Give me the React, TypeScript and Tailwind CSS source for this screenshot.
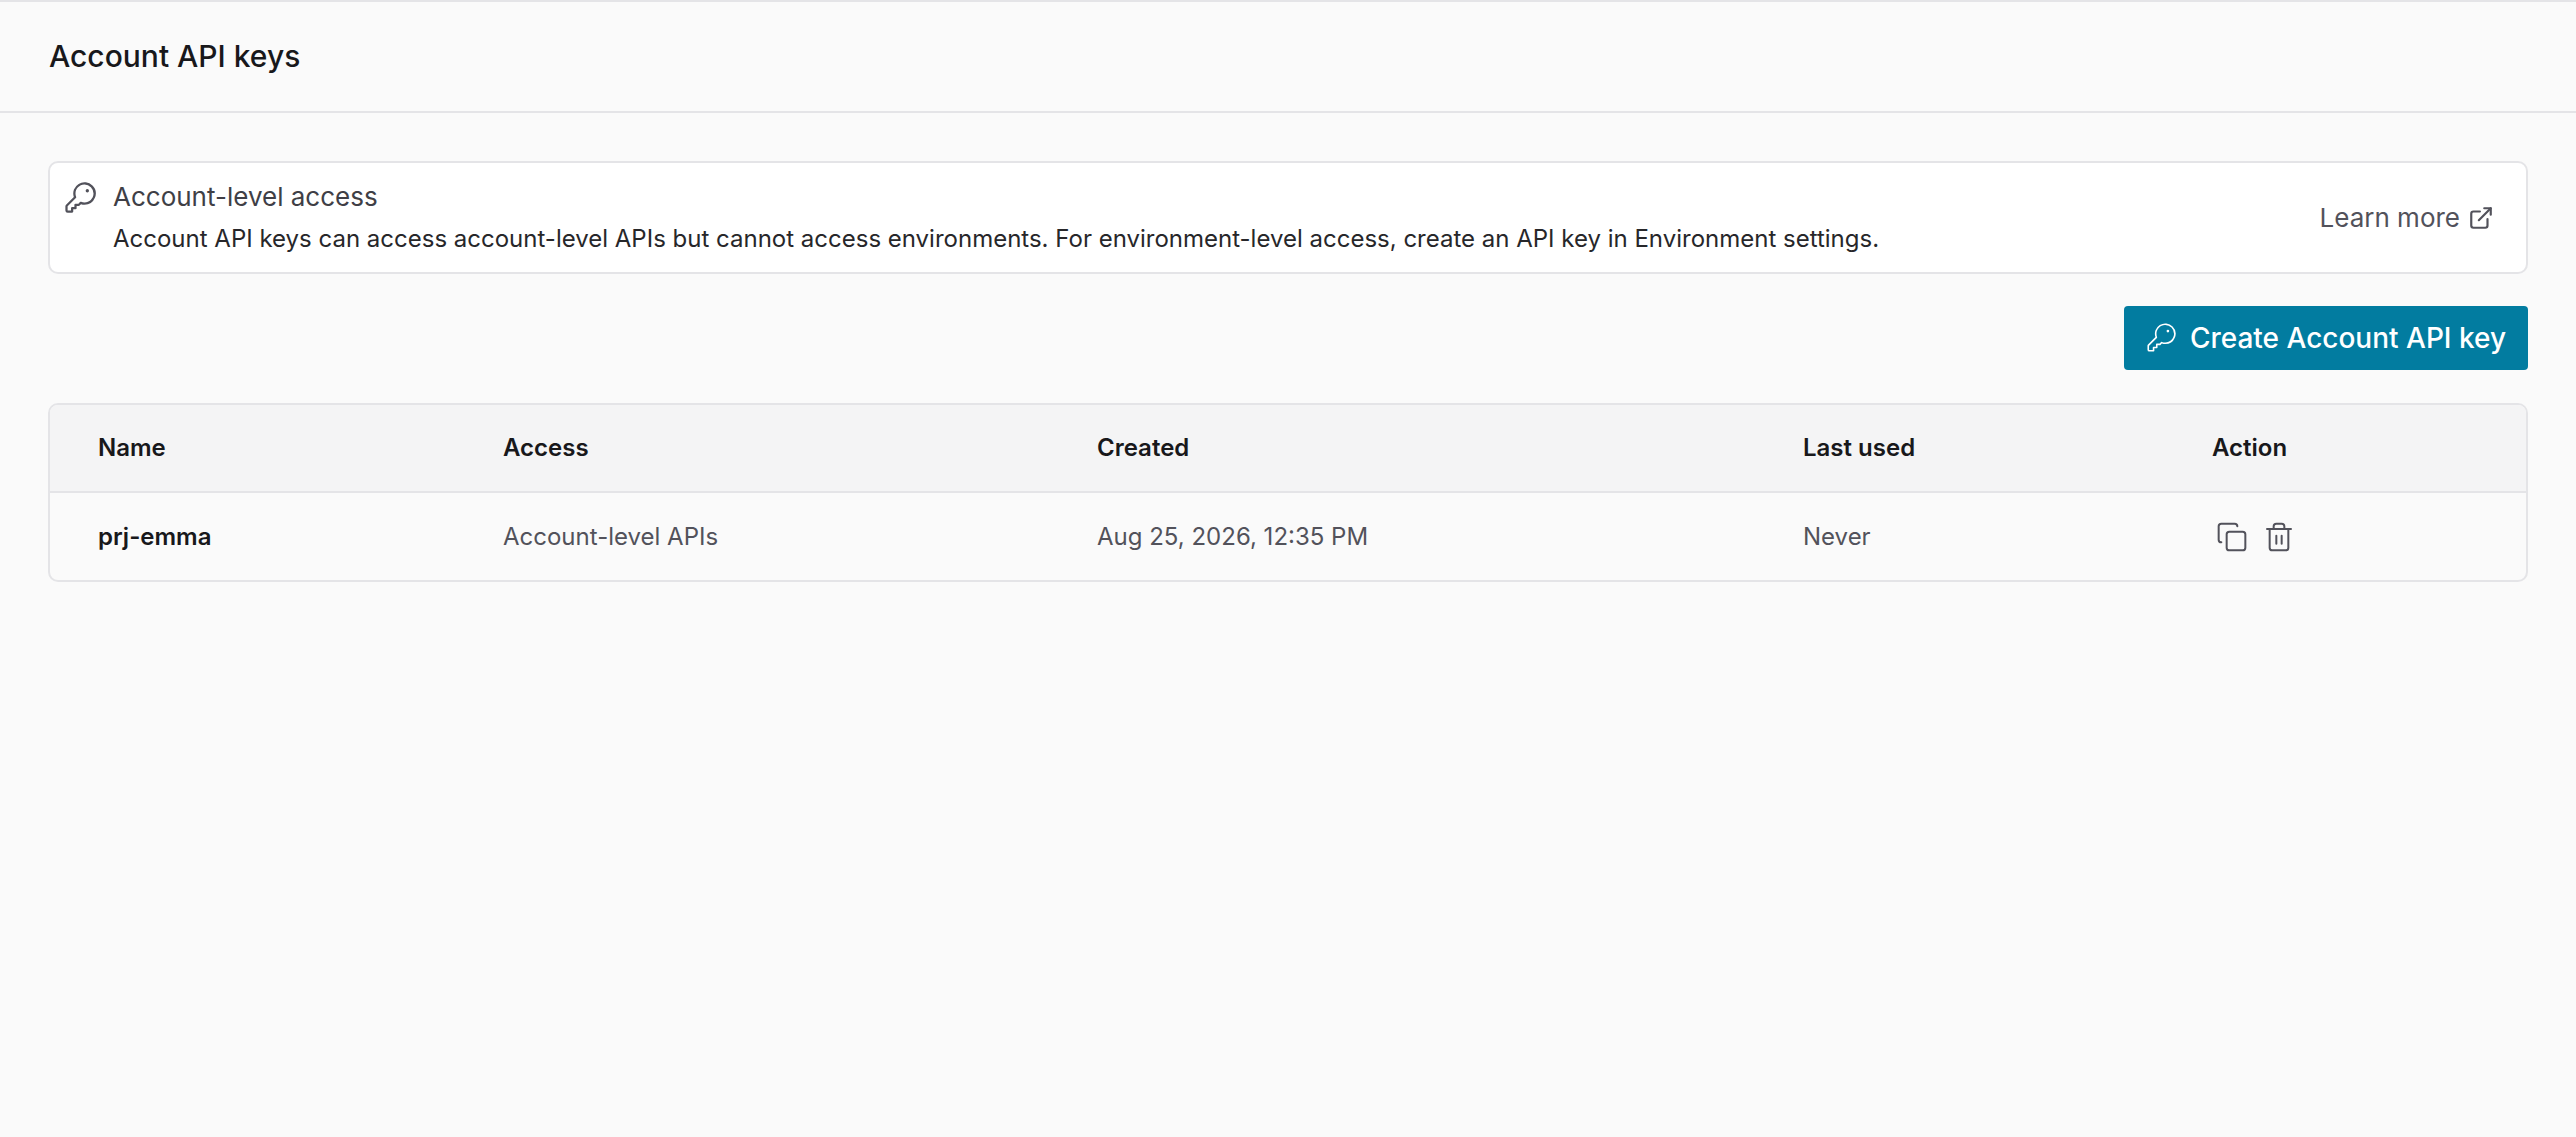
import React from "react";
import { Copy, ExternalLink, Trash2 } from "lucide-react";
import { PiKey, PiKeyLight } from "react-icons/pi";

const columns = ["Name", "Access", "Created", "Last used", "Action"];
const gridCols = "grid grid-cols-[405px_594px_706px_409px_1fr] items-center";

export default function App() {
    return (
        <div className="min-h-[1137px] bg-[#fafafa] font-['Inter',sans-serif] text-[#18181b]">
            <header className="flex h-[113px] items-center border-y-2 border-t-[#e4e4e7] border-b-[#e4e4e7] px-[49px]">
                <h1 className="text-[30px] font-medium">Account API keys</h1>
            </header>

            <main className="flex flex-col px-[48px] pt-[48px]">
                <section className="flex h-[113px] items-center rounded-[10px] border-2 border-[#e4e4e7] bg-white pr-[32px] pl-[12px]">
                    <PiKey className="h-[36px] w-[36px] shrink-0 self-start mt-[17px] text-[#52525b]" />
                    <div className="ml-[15px] flex-1">
                        <p className="text-[26px] leading-[36px] text-[#3f3f46]">Account-level access</p>
                        <p className="mt-[6px] text-[24px] leading-[36px] text-[#27272a]">
                            Account API keys can access account-level APIs but cannot access environments. For environment-level access, create an API key in Environment settings.
                        </p>
                    </div>
                    <a className="flex items-center gap-[8px] text-[26px] text-[#52525b]">
                        Learn more
                        <ExternalLink className="h-[26px] w-[26px]" strokeWidth={2} />
                    </a>
                </section>

                <div className="mt-[32px] flex justify-end">
                    <button className="flex h-[64px] items-center gap-[12px] rounded-[4px] bg-[#027ca0] pr-[22px] pl-[20px] text-[28px] font-medium text-white">
                        <PiKeyLight className="h-[34px] w-[34px]" />
                        Create Account API key
                    </button>
                </div>

                <section className="mt-[33px] overflow-hidden rounded-[10px] border-2 border-[#e4e4e7]">
                    <div className={`${gridCols} h-[88px] border-b-2 border-[#e4e4e7] bg-[#f4f4f5] text-[24px] font-semibold`}>
                        {columns.map((col) => (
                            <div key={col} className="pl-[48px]">{col}</div>
                        ))}
                    </div>
                    <div className={`${gridCols} h-[87px] text-[24px] text-[#52525b]`}>
                        <div className="pl-[48px] font-semibold text-[#18181b]">prj-emma</div>
                        <div className="pl-[48px]">Account-level APIs</div>
                        <div className="pl-[48px]">Aug 25, 2026, 12:35 PM</div>
                        <div className="pl-[48px]">Never</div>
                        <div className="flex items-center gap-[15px] pl-[52px]">
                            <Copy className="h-[32px] w-[32px]" strokeWidth={1.5} />
                            <Trash2 className="h-[32px] w-[32px]" strokeWidth={1.5} />
                        </div>
                    </div>
                </section>
            </main>
        </div>
    );
}
